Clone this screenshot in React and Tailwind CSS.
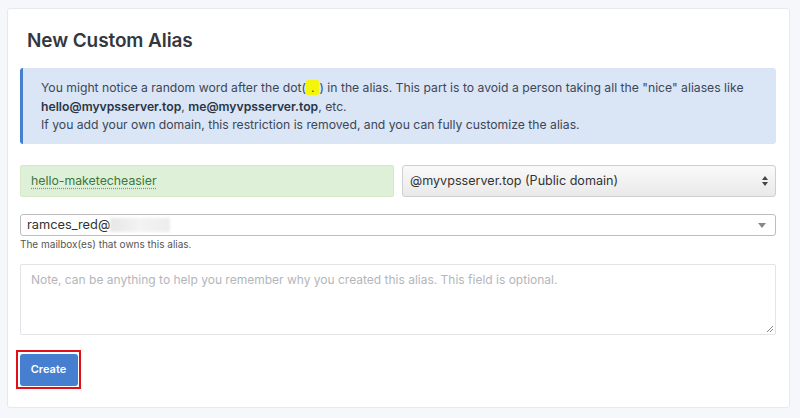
import React from "react";

export default function App() {
  return (
    <div className="h-[418px] w-[800px] bg-[#f5f7fb] pt-[8px] pl-[7px] font-['Inter',sans-serif] overflow-hidden">
      <div className="w-[783px] h-[400px] bg-white border border-[#e6e9ee] rounded-[3px] pt-[20px] pl-[12px] pr-[13px]">
        {/* Card title */}
        <h1 className="pl-[7px] text-[19px] leading-[24px] font-semibold text-[#333840] tracking-[-0.1px]">
          New Custom Alias
        </h1>

        {/* Info alert */}
        <div className="mt-[15px] h-[76px] bg-[#dae5f5] border-l-[3px] border-[#467fcf] rounded-[3px] pl-[18px] pt-[11px] text-[12.2px] leading-[18.5px] text-[#3c4757]">
          <p>
            You might notice a random word after the dot(
            <span className="bg-[#f5f50a] px-[5px] rounded-[2px]">.</span>) in the alias. This part is to avoid a
            person taking all the "nice" aliases like
          </p>
          <p>
            <b className="font-semibold text-[#2a3547]">hello@myvpsserver.top</b>,{" "}
            <b className="font-semibold text-[#2a3547]">me@myvpsserver.top</b>, etc.
          </p>
          <p>If you add your own domain, this restriction is removed, and you can fully customize the alias.</p>
        </div>

        {/* Prefix + domain */}
        <div className="mt-[21px] flex gap-[8px]">
          <div className="w-[374px] h-[32px] bg-[#dff0d8] border border-[#d6e9c6] rounded-[2px] flex items-center pl-[10px] text-[12.3px] text-[#3c763d]">
            <span className="underline decoration-dotted decoration-[#d66] underline-offset-[3px]">
              hello-maketecheasier
            </span>
          </div>
          <div className="flex-1 h-[32px] bg-gradient-to-b from-[#fafafa] to-[#e9e9e9] border border-[#cfcfcf] rounded-[3px] flex items-center justify-between pl-[7px] pr-[6px] text-[12.6px] text-[#333]">
            <span>@myvpsserver.top (Public domain)</span>
            <svg width="8" height="12" viewBox="0 0 8 12">
              <path d="M4 1 L7 5 L1 5 Z" fill="#444" />
              <path d="M4 11 L7 7 L1 7 Z" fill="#444" />
            </svg>
          </div>
        </div>

        {/* Mailbox select */}
        <div className="mt-[17px] h-[22px] border border-[#bdbdbd] rounded-[3px] flex items-center justify-between pl-[6px] pr-[9px] text-[12.8px] text-[#333]">
          <span className="flex items-center">
            ramces_red@
            <span className="inline-block w-[60px] h-[14px] bg-gradient-to-r from-[#e6e6e6] via-[#f3f3f3] to-[#ececec] blur-[1.5px]"></span>
          </span>
          <svg width="8" height="5" viewBox="0 0 8 5">
            <path d="M0 0 L8 0 L4 5 Z" fill="#888" />
          </svg>
        </div>
        <p className="mt-[1px] text-[10px] leading-[14px] text-[#555]">The mailbox(es) that owns this alias.</p>

        {/* Note */}
        <div className="mt-[13px] relative h-[71px] border border-[#e2e4e8] rounded-[2px] pl-[10px] pt-[6px] text-[12px] text-[#b3b6bb]">
          Note, can be anything to help you remember why you created this alias. This field is optional.
          <svg className="absolute right-[1px] bottom-[1px]" width="8" height="8" viewBox="0 0 8 8">
            <path d="M7 1 L1 7 M7 4 L4 7" stroke="#888" strokeWidth="1" />
          </svg>
        </div>

        {/* Submit */}
        <div className="mt-[15px] ml-[-4px] w-[65px] h-[39px] border-[2px] border-[#e0101a] flex items-center justify-center">
          <button className="w-[58px] h-[32px] bg-[#467fcf] rounded-[3px] text-white text-[11px] font-semibold">
            Create
          </button>
        </div>
      </div>
    </div>
  );
}
